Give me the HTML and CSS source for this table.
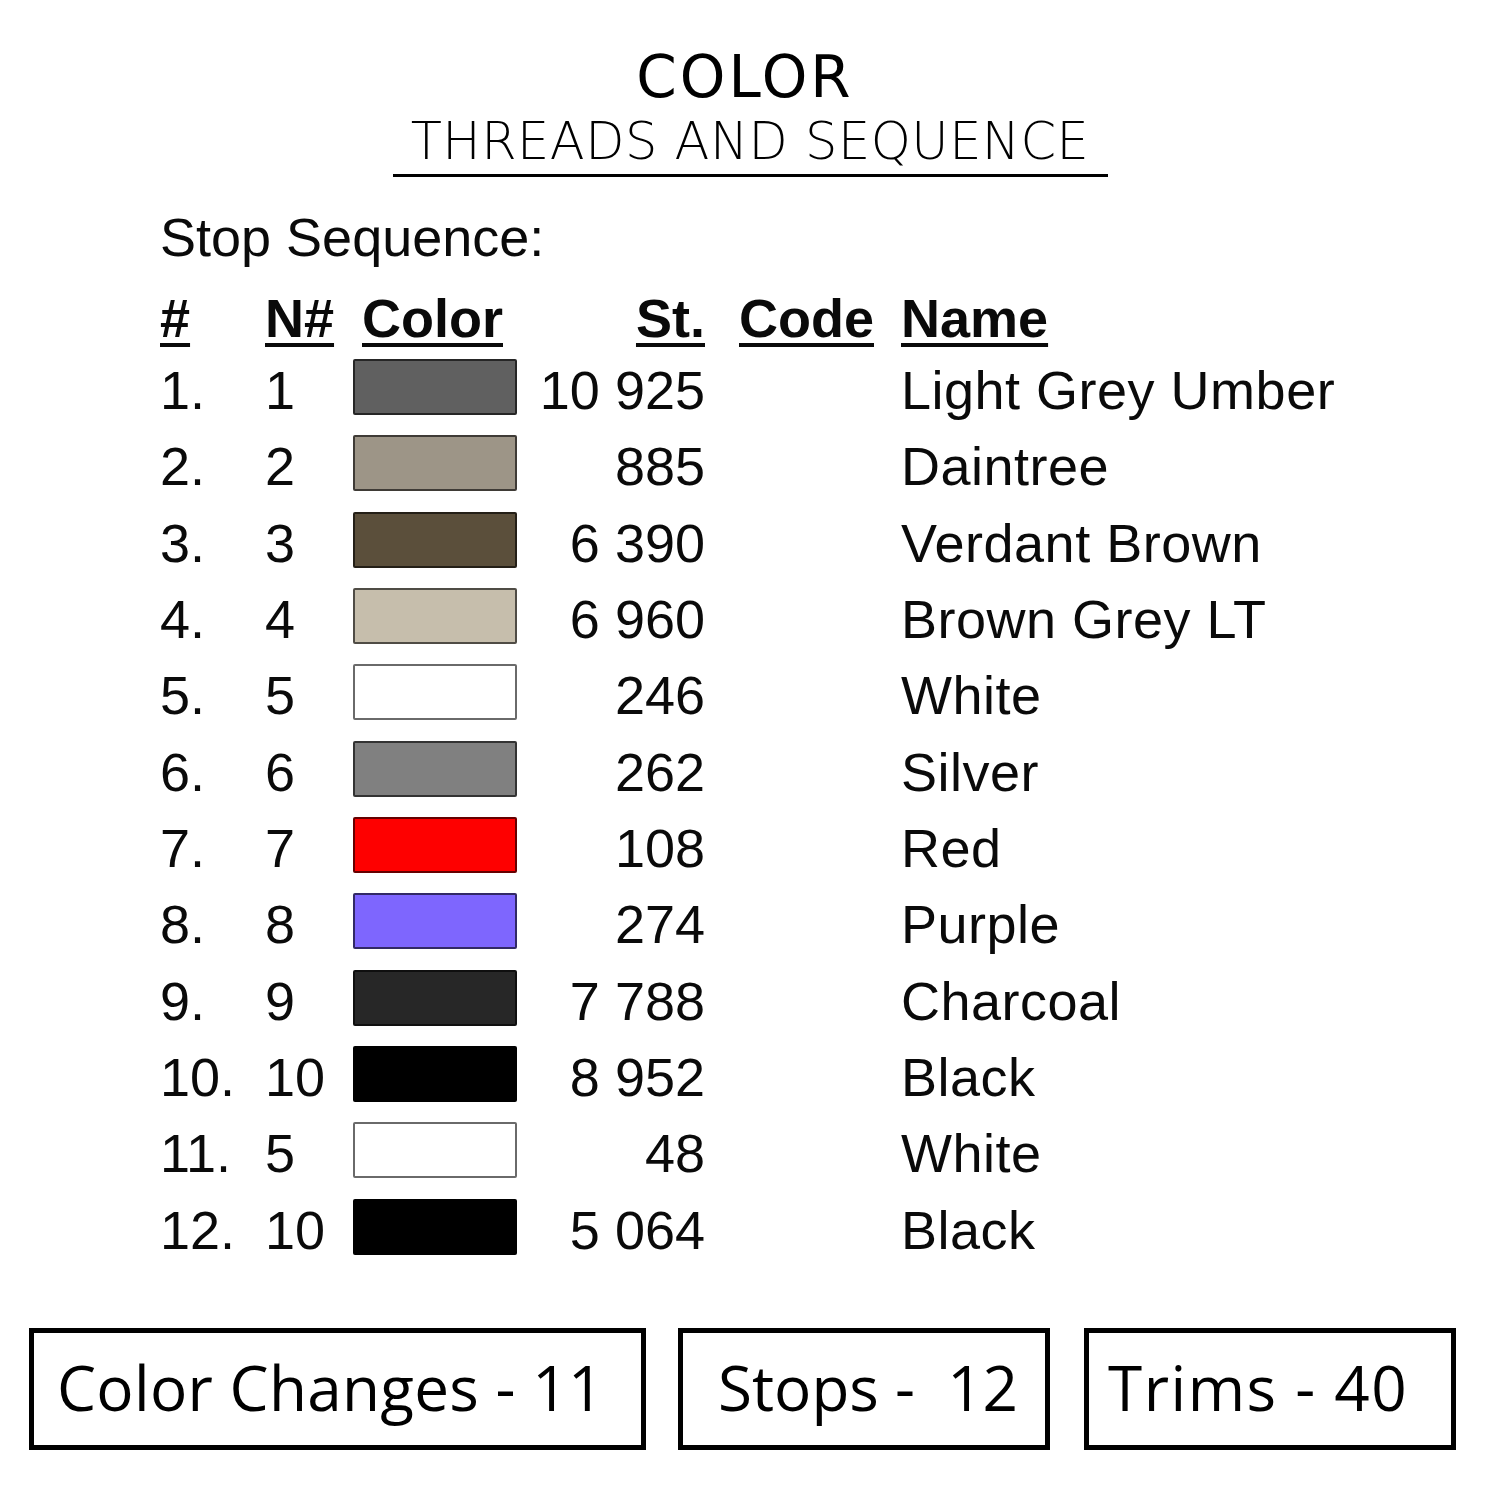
FILE: index.html
```html
<!DOCTYPE html>
<html lang="en">
<head>
<meta charset="utf-8">
<title>Color – Threads and Sequence</title>
<link rel="stylesheet" href="styles.css">
</head>
<body>
<div class="page">
  <header class="title">
    <h1 class="title-main">COLOR</h1>
    <h2 class="title-sub">THREADS AND SEQUENCE</h2>
    <div class="title-rule"></div>
  </header>

  <section class="sequence">
    <div class="seq-label">Stop Sequence:</div>
    <div class="seq-grid">
      <div class="hd">#</div>
      <div class="hd">N#</div>
      <div class="hd color">Color</div>
      <div class="hd right">St.</div>
      <div class="hd code">Code</div>
      <div class="hd">Name</div>

      <div class="cell">1.</div><div class="cell">1</div><div class="swatch c1"></div><div class="cell right">10 925</div><div class="cell"></div><div class="cell name">Light Grey Umber</div>
      <div class="cell">2.</div><div class="cell">2</div><div class="swatch c2"></div><div class="cell right">885</div><div class="cell"></div><div class="cell name">Daintree</div>
      <div class="cell">3.</div><div class="cell">3</div><div class="swatch c3"></div><div class="cell right">6 390</div><div class="cell"></div><div class="cell name">Verdant Brown</div>
      <div class="cell">4.</div><div class="cell">4</div><div class="swatch c4"></div><div class="cell right">6 960</div><div class="cell"></div><div class="cell name">Brown Grey LT</div>
      <div class="cell">5.</div><div class="cell">5</div><div class="swatch c5"></div><div class="cell right">246</div><div class="cell"></div><div class="cell name">White</div>
      <div class="cell">6.</div><div class="cell">6</div><div class="swatch c6"></div><div class="cell right">262</div><div class="cell"></div><div class="cell name">Silver</div>
      <div class="cell">7.</div><div class="cell">7</div><div class="swatch c7"></div><div class="cell right">108</div><div class="cell"></div><div class="cell name">Red</div>
      <div class="cell">8.</div><div class="cell">8</div><div class="swatch c8"></div><div class="cell right">274</div><div class="cell"></div><div class="cell name">Purple</div>
      <div class="cell">9.</div><div class="cell">9</div><div class="swatch c9"></div><div class="cell right">7 788</div><div class="cell"></div><div class="cell name">Charcoal</div>
      <div class="cell">10.</div><div class="cell">10</div><div class="swatch c10"></div><div class="cell right">8 952</div><div class="cell"></div><div class="cell name">Black</div>
      <div class="cell">11.</div><div class="cell">5</div><div class="swatch c5"></div><div class="cell right">48</div><div class="cell"></div><div class="cell name">White</div>
      <div class="cell">12.</div><div class="cell">10</div><div class="swatch c10"></div><div class="cell right">5 064</div><div class="cell"></div><div class="cell name">Black</div>
    </div>
  </section>

  <footer class="stats">
    <div class="stat stat-changes">Color Changes - 11</div>
    <div class="stat stat-stops">Stops -&nbsp; 12</div>
    <div class="stat stat-trims">Trims - 40</div>
  </footer>
</div>
</body>
</html>
```

FILE: styles.css
```css
html, body {
  margin: 0;
  padding: 0;
  background: #ffffff;
}

.page {
  width: 1500px;
  height: 1500px;
  box-sizing: border-box;
  color: #000;
  display: flex;
  flex-direction: column;
}

/* ---------- title ---------- */
.title {
  display: flex;
  flex-direction: column;
  align-items: center;
  padding-top: 43px;
}

.title-main {
  margin: 0 0 0 -10px;
  font-family: "DejaVu Sans", "Open Sans", sans-serif;
  font-weight: 400;
  font-size: 58px;
  line-height: 68px;
  height: 68px;
  letter-spacing: 3px;
}

.title-sub {
  margin: 1px 0 0 0;
  font-family: "DejaVu Sans", "Open Sans", sans-serif;
  font-weight: 200;
  font-size: 51px;
  line-height: 60px;
  height: 60px;
  letter-spacing: 0.5px;
}

.title-rule {
  width: 715px;
  height: 3px;
  background: #000;
  margin-top: 2px;
}

/* ---------- sequence table ---------- */
.sequence {
  padding-left: 160px;
  margin-top: 22px;
  font-family: "Liberation Sans", Arial, sans-serif;
  font-size: 54px;
  color: #0a0a0a;
}

.seq-label {
  line-height: 76px;
  height: 76px;
  margin-bottom: 5px;
}

.seq-grid {
  display: grid;
  grid-template-columns: 105px 88px 164px 188px 196px auto;
  grid-template-rows: 72px repeat(12, 76.33px);
}

.hd {
  font-weight: 700;
  line-height: 76.33px;
  text-decoration: underline;
  text-decoration-thickness: 4px;
  text-underline-offset: 6px;
  white-space: nowrap;
}

.hd.color {
  margin-left: 9px;
}

.hd.code {
  margin-left: 34px;
}

.cell {
  line-height: 76.33px;
  white-space: nowrap;
}

.cell.name {
  letter-spacing: 0.5px;
}

.right {
  text-align: right;
}

.swatch {
  align-self: start;
  margin-top: 7px;
  height: 56px;
  box-sizing: border-box;
  border: 2px solid rgba(0, 0, 0, 0.6);
  border-radius: 2px;
}

.c1 { background: #606060; }
.c2 { background: #9d9587; }
.c3 { background: #5b4f3b; }
.c4 { background: #c6beac; }
.c5 { background: #ffffff; border-color: #6a6a6a; }
.c6 { background: #808080; }
.c7 { background: #fe0000; }
.c8 { background: #7e66fe; }
.c9 { background: #272727; }
.c10 { background: #000000; }

/* ---------- stats boxes ---------- */
.stats {
  display: flex;
  margin-top: 60px;
  padding-left: 29px;
}

.stat {
  box-sizing: border-box;
  height: 122px;
  border: 5px solid #000;
  display: flex;
  align-items: center;
  font-family: "Open Sans", "Noto Sans", sans-serif;
  font-size: 62px;
  font-weight: 400;
  letter-spacing: 0.3px;
  white-space: nowrap;
  padding-bottom: 4px;
}

.stat-changes {
  width: 617px;
  padding-left: 23px;
}

.stat-stops {
  width: 372px;
  margin-left: 32px;
  padding-left: 35px;
  letter-spacing: 0;
}

.stat-trims {
  width: 372px;
  margin-left: 34px;
  padding-left: 19px;
  letter-spacing: 1.5px;
}
```
